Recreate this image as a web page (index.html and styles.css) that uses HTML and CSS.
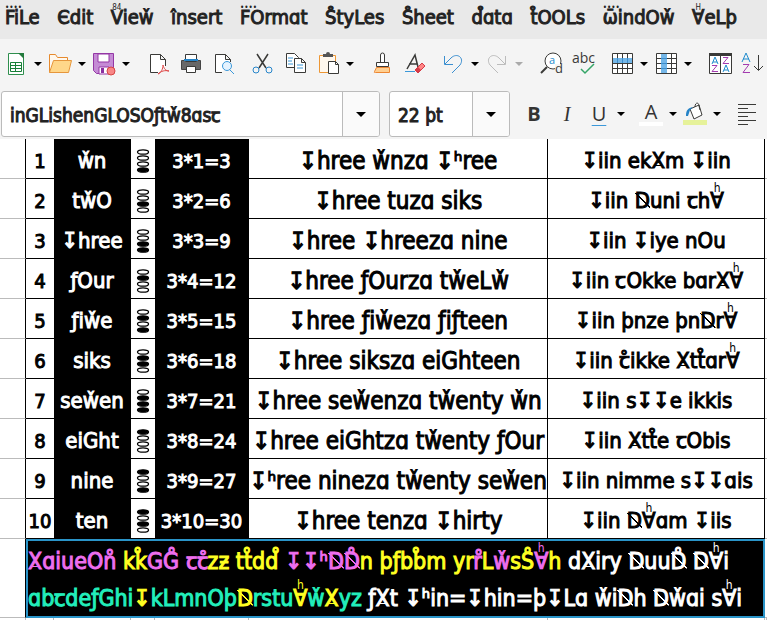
FILE: index.html
```html
<!DOCTYPE html>
<html lang="en">
<head>
<meta charset="utf-8">
<title>Spreadsheet</title>
<link rel="stylesheet" href="styles.css">
</head>
<body>
<nav class="menu">
<a href="#"><span class="marked" data-mark="••••">F</span>iLe</a>
<a href="#">Єdit</a>
<a href="#"><span class="marked" data-mark="84">V</span>iew̌</a>
<a href="#">însert</a>
<a href="#"><span class="marked" data-mark="••••">F</span>Ormɑt</a>
<a href="#">S̊tyLes</a>
<a href="#">S̊heet</a>
<a href="#">d̊ɑtɑ</a>
<a href="#">t̊OOLs</a>
<a href="#"><span class="marked" data-mark="••••">ω̄</span>indOw̌</a>
<a href="#"><span class="marked" data-mark="H">∀</span>eLþ</a>
</nav>
<div class="bars">
<div class="toolbar">
  <div class="group tight">
    <button class="tool" aria-label="New"><svg viewBox="0 0 24 24"><path d="M4.500 1.500h11l4 4v17h-15z" fill="#fff" stroke="#2f8f4e"/><path d="M14 1h6v6z" fill="#227a3c"/><path d="M6.500 10.500h11v9h-11zM6.500 13.500h11M6.500 16.500h11M11.500 10.500v9" fill="none" stroke="#188038"/></svg></button>
    <button class="drop" aria-label="New options"></button>
    <button class="tool" aria-label="Open"><svg viewBox="0 0 24 24"><path d="M1.500 20.500v-18h6l2 3h10v3" fill="#fff8ee" stroke="#e68a2e"/><path d="M1.500 20.500l4-12h18l-3 12z" fill="#ffd78a" stroke="#e6963c"/></svg></button>
    <button class="drop" aria-label="Open options"></button>
    <button class="tool" aria-label="Save"><svg viewBox="0 0 24 24"><path d="M1.500 1.500h20v20h-17l-3-3z" fill="#c58bd5" stroke="#9437a5"/><path d="M6 2h11v8H6zM7 15h10v7H7z" fill="#fff" stroke="#9437a5"/><path d="M9 16h3v5H9z" fill="#8a2fa0"/><circle cx="19" cy="19" r="4" fill="#f88686" stroke="#d64545"/></svg></button>
    <button class="drop" aria-label="Save options"></button>
  </div>
  <div class="group">
    <button class="tool" aria-label="Export as PDF"><svg viewBox="0 0 24 24"><path d="M12 20.500H4.500v-18h10l5 5V14M14.500 2.500v5h5" fill="#fff" stroke="#3a3a38"/><path d="M12 22c3-1 5-5 5-9 1 4 3 6 6 6-4-1-8 0-11 3z" fill="none" stroke="#e04848"/></svg></button>
    <button class="tool" aria-label="Print"><svg viewBox="0 0 24 24"><path d="M2.500 8.500h19v9h-19z" fill="#686868" stroke="#444"/><path d="M6.500 2.500h11v7h-11z" fill="#fff" stroke="#3a3a38"/><path d="M5 7h14v2H5z" fill="#2583c7"/><path d="M7.500 14.500h9v6h-9z" fill="#fff" stroke="#3a3a38"/></svg></button>
    <button class="tool" aria-label="Print preview"><svg viewBox="0 0 24 24"><path d="M10 20.500H3.500v-18h10l5 5V10M13.500 2.500v5h5" fill="#fff" stroke="#3a3a38"/><circle cx="15" cy="14" r="4.500" fill="#e5f3ff" stroke="#3b98d9"/><path d="M18 18l4 4" stroke="#3b98d9"/></svg></button>
  </div>
  <div class="group">
    <button class="tool" aria-label="Cut"><svg viewBox="0 0 24 24" fill="none"><path d="M7 2l9 14M18 2L9 16" stroke="#3a3a38" stroke-width="1.500"/><circle cx="6" cy="18" r="3" stroke="#2685ca"/><circle cx="19" cy="18" r="3" stroke="#2685ca"/></svg></button>
    <button class="tool" aria-label="Copy"><svg viewBox="0 0 24 24"><path d="M3.500 1.500h8l4 4v10h-12z" fill="#fff" stroke="#3a3a38"/><path d="M5 6h5M5 9h4M5 12h5" stroke="#3b98d9"/><path d="M11.500 6.500h7l4 4v10h-11zM18.500 6.500v4h4" fill="#fff" stroke="#3a3a38"/><path d="M14 13h6M14 16h6" stroke="#3b98d9"/></svg></button>
    <div class="group tight">
    <button class="tool" aria-label="Paste"><svg viewBox="0 0 24 24"><path d="M3.500 3.500h16v17h-16z" fill="#fff8ee" stroke="#ed9735"/><path d="M7 2h3a2 2 0 0 1 4 0h3v3H7z" fill="#555"/><path d="M12.500 9.500h7l3 3v9h-10z" fill="#fff" stroke="#3a3a38"/><path d="M19.500 9.500v3h3" fill="none" stroke="#3a3a38"/></svg></button>
    <button class="drop" aria-label="Paste options"></button>
    </div>
  </div>
  <div class="group">
    <button class="tool" aria-label="Clone formatting"><svg viewBox="0 0 24 24"><path d="M10.500 10V3a2 2 0 0 1 4 0v7" fill="#fff" stroke="#3a3a38"/><path d="M6.500 10.500h12v4h-12z" fill="#fff" stroke="#3a3a38"/><path d="M6.500 15.500h13v5h-14q-2 0-1-1z" fill="#ffcf91" stroke="#ed8733"/></svg></button>
    <button class="tool" aria-label="Clear formatting"><svg viewBox="0 0 24 24"><path d="M4 17l8-14 3 12M6 12h8" fill="none" stroke="#3a3a38" stroke-width="1.500"/><path d="M2 19.500h10" stroke="#3b98d9"/><path d="M12 18l7-7 3 3-7 7z" fill="#ff8585" stroke="#d63b47"/><path d="M12 18l3-3 3 3-3 3z" fill="#d63b47"/></svg></button>
  </div>
  <div class="group tight">
    <button class="tool" aria-label="Undo"><svg viewBox="0 0 24 24"><path d="M3.500 4v8.500H12M4 12l6-6c6-6 14 0 9 7l-8 8" fill="none" stroke="#3b8fd0"/></svg></button>
    <button class="drop" aria-label="Undo options"></button>
    <button class="tool" aria-label="Redo" disabled><svg viewBox="0 0 24 24"><path d="M20.500 4v8.500H12M20 12l-6-6C8 0 0 6 5 13l8 8" fill="none" stroke="#bcbcbc"/></svg></button>
    <button class="drop dim" aria-label="Redo options" disabled></button>
  </div>
  <div class="group">
    <button class="tool" aria-label="Find and replace"><svg viewBox="0 0 24 24"><circle cx="14" cy="9" r="8" fill="#fff" stroke="#3a3a38"/><path d="M8 15l-6 6" stroke="#3a3a38" stroke-width="2"/><path d="M16 12h9v11h-9z" fill="#f4f4f4"/><text x="10" y="12" font-size="11" fill="#1e8bcd">a</text><text x="16" y="21" font-size="13" fill="#3a3a38">d</text></svg></button>
    <button class="tool" aria-label="Spelling"><svg viewBox="0 0 24 24"><text x="0" y="11" font-size="14" fill="#3a3a38">abc</text><path d="M9 17l4 4 9-9" fill="none" stroke="#35a567" stroke-width="1.500"/></svg></button>
  </div>
  <div class="group tight">
    <button class="tool" aria-label="Row"><svg viewBox="0 0 24 24"><path d="M2.500 1.500h20v20h-20z" fill="#fff"/><path d="M2.500 1.500h20v20h-20zM2.500 6.500h20M2.500 11.500h20M2.500 16.500h20M7.500 1.500v20M12.500 1.500v20M17.500 1.500v20" fill="none" stroke="#3a3a38"/><path d="M3 6h19v5H3z" fill="#75b7e8"/><path d="M7.500 6v5M12.500 6v5M17.500 6v5" stroke="#3b8fd0"/></svg></button>
    <button class="drop" aria-label="Row options"></button>
    <button class="tool" aria-label="Column"><svg viewBox="0 0 24 24"><path d="M2.500 1.500h20v20h-20z" fill="#fff"/><path d="M2.500 1.500h20v20h-20zM2.500 6.500h20M2.500 11.500h20M2.500 16.500h20M7.500 1.500v20M12.500 1.500v20M17.500 1.500v20" fill="none" stroke="#3a3a38"/><path d="M7 2h6v19H7z" fill="#75b7e8"/><path d="M7 6.500h6M7 11.500h6M7 16.500h6" stroke="#3b8fd0"/></svg></button>
    <button class="drop" aria-label="Column options"></button>
  </div>
  <div class="group">
    <button class="tool" aria-label="Sort"><svg viewBox="0 0 24 24"><path d="M1.500 2.500h22v19h-22zM12.500 3v18" fill="#fff" stroke="#3a3a38"/><path d="M1 1h23v3H1z" fill="#3a3a38"/><path d="M4 12l3-7 3 7M5 10h4M15 20l3-7 3 7M16 18h4" fill="none" stroke="#1e8bcd"/><path d="M4 13.500h5l-5 6h6M15 5.500h5l-5 6h6" fill="none" stroke="#a33cb0"/></svg></button>
    <button class="tool" aria-label="Sort ascending"><svg viewBox="0 0 24 24"><path d="M1 10l4-9 4 9M2 7h6" fill="none" stroke="#1e8bcd"/><path d="M2 12.500h6l-6 8h7" fill="none" stroke="#a33cb0"/><path d="M17.500 3v15M13 14l4.500 4.500L22 14" fill="none" stroke="#3a3a38"/></svg></button>
  </div>
</div>
<div class="format">
  <div class="combo name"><input type="text" aria-label="Font name" value="inGLishenGLOSOƒtw̌8ɑsꞇ"><button aria-label="Font list"></button></div>
  <div class="combo size"><input type="text" aria-label="Font size" value="22 þt"><button aria-label="Size list"></button></div>
  <div class="styles">
    <div class="group"><button class="tool letter bold">B</button><button class="tool letter italic">I</button></div>
    <div class="group tight"><button class="tool letter under">U</button><button class="drop" aria-label="Underline options"></button></div>
  </div>
  <div class="group tight">
    <button class="tool letter color">A</button><button class="drop" aria-label="Font color options"></button>
    <button class="tool" aria-label="Background color"><svg viewBox="0 0 24 24"><path d="M0 18h24v5H0z" fill="#e6f29a"/><path d="M7 7l9-4 3 10-8 4zM12 5c0-5 4-5 4-1l1 4" fill="#fff" stroke="#3a3a38"/><path d="M3 14c0-6 2-8 7-9L7 8l-2 6z" fill="#2583c7"/></svg></button><button class="drop" aria-label="Background color options"></button>
  </div>
  <button class="tool" aria-label="Align left"><svg viewBox="0 0 24 24"><path d="M3 2.500h18M3 6.500h10M3 10.500h18M3 14.500h10M3 18.500h18M3 22.500h10" stroke="#3a3a38"/></svg></button>
</div>
</div>
<table class="sheet">
<colgroup><col class="c-edge"><col class="c-num"><col class="c-word"><col class="c-dots"><col class="c-sum"><col class="c-phrase"><col><col class="c-end"></colgroup>
<tbody id="rows"></tbody>
</table>
<script src="script.js"></script>
</body>
</html>
```
FILE: styles.css
```css
* { box-sizing: border-box; }

body {
  margin: 0;
  background: #fff;
  color: #000;
  font-family: "DejaVu Sans Condensed", "DejaVu Sans", sans-serif;
  overflow-x: hidden;
}

button, input { font: inherit; color: inherit; }

.menu {
  display: flex;
  justify-content: space-between;
  height: 39px;
  padding: 2px 30px 0 5px;
  background: #e9e9e9;
  font-size: 20px;
  line-height: 30px;
  -webkit-text-stroke: 1px;
}
.menu a { color: #222; text-decoration: none; white-space: nowrap; }

.bars { background: #f4f4f4; height: 100px; overflow: hidden; }

.toolbar {
  display: flex;
  gap: 14px;
  height: 50px;
  padding: 0 4px;
  align-items: center;
}
.group { display: flex; gap: 9px; align-items: center; }
.group.tight { gap: 4px; }

.tool, .drop, .combo button {
  flex: none;
  border: 0;
  padding: 0;
  background: none;
}
.tool { width: 24px; height: 24px; }
.tool svg { display: block; width: 24px; height: 24px; overflow: visible; font-family: "Open Sans", sans-serif; }
.drop { width: 12px; height: 24px; display: flex; align-items: center; justify-content: center; }
.drop::before, .combo button::before {
  content: "";
  border: 4px solid transparent;
  border-top-color: #000;
  border-bottom: 0;
}
.drop.dim::before { border-top-color: #aaa; }

.format {
  display: flex;
  gap: 12px;
  height: 48px;
  padding: 2px 8px 0 1px;
  align-items: center;
}
.combo {
  display: flex;
  height: 46px;
  border: 1px solid #bbb;
  border-radius: 3px;
  background: #fff;
  overflow: hidden;
}
.combo.name { flex: 1; margin-right: -3px; }
.combo.size { width: 121px; }
.combo input {
  flex: 1;
  min-width: 0;
  border: 0;
  padding: 2px 8px 0;
  background: none;
  color: #222;
  font-size: 19px;
  outline: 0;
  -webkit-text-stroke: 1px;
}
.combo button {
  display: flex;
  width: 37px;
  align-items: center;
  justify-content: center;
  border-left: 1px solid #bbb;
  background: #fafafa;
}
.combo button::before { border-width: 5px 5px 0; }

.styles { display: flex; gap: 8px; }
.letter { font: 20px/24px "Open Sans", sans-serif; color: #333; }
.bold { font-weight: 700; }
.italic { font-family: "Liberation Serif", serif; font-style: italic; }
.under { text-decoration: underline #3b98d9 1px; text-underline-offset: 4px; }
.color { border-bottom: 4px solid #fff; line-height: 18px; }

.sheet {
  width: 100%;
  table-layout: fixed;
  border-collapse: separate;
  border-spacing: 0;
  font-size: 22px;
  -webkit-text-stroke: 1px;
}
.c-edge { width: 26px; }
.c-num { width: 28px; }
.c-word { width: 77px; }
.c-dots { width: 24px; }
.c-sum { width: 94px; }
.c-phrase { width: 39%; }
.c-end { width: 2px; }

.sheet td {
  height: 40px;
  padding: 5px 0 0;
  border-right: 1px solid #000;
  border-bottom: 1px solid #000;
  text-align: center;
  white-space: nowrap;
  line-height: 30px;
}
.sheet .edge { border-bottom-color: #bbb; }
.sheet .end { border-right: 0; border-bottom-color: #bbb; }
.sheet .ink { background: #000; color: #fff; }
.sheet .num, .sheet .dots { border-right: 0; }
.sheet .num, .sheet .sum { font-size: 20px; }
.sheet .phrase { font-size: 24px; }
.dots svg { display: block; width: 14px; height: 24px; margin: 0 auto; }

.sheet .picked {
  height: 79px;
  padding: 1px 0 0;
  border: 2px solid #2a94c8;
  background: #000;
  text-align: left;
  font-size: 23px;
}
.picked div { height: 37px; line-height: 38px; }
.sheet .tail td { height: 4px; padding: 0; border-bottom: 0; border-color: #bbb; }

.pink { color: #ee6eee; }
.lemon { color: #ffff22; }
.aqua { color: #22eebb; }
.white { color: #fff; }

.marked { position: relative; }
.marked::before {
  content: attr(data-mark);
  position: absolute;
  left: 0;
  right: 0;
  top: -6px;
  font-size: 12px;
  line-height: 12px;
  text-align: center;
  -webkit-text-stroke: 0;
}
.menu .marked::before { font-size: 8px; top: -3px; }
.slashed {
  background: linear-gradient(to top right, transparent 48%, currentColor 48%, currentColor 54%, transparent 54%) center / 100% 60% no-repeat;
}
.barred {
  background: linear-gradient(currentColor, currentColor) center 72% / 60% 1px no-repeat;
}
```
FILE: script.js
```js
const rows = [
  ["w̌n", "3", "↧hree w̌nzɑ ↧ʰree", "↧iin ekXm ↧iin"],
  ["tw̌O", "6", "↧hree tuzɑ siks", "↧iin Duni ꞇh∀"],
  ["↧hree", "9", "↧hree ↧hreezɑ nine", "↧iin ↧iye nOu"],
  ["ƒOur", "12", "↧hree ƒOurzɑ tw̌eLw̌", "↧iin ꞇOkke bɑrX∀"],
  ["ƒiw̌e", "15", "↧hree ƒiw̌ezɑ ƒiƒteen", "↧iin þnze þnDr∀"],
  ["siks", "18", "↧hree sikszɑ eiGhteen", "↧iin ꞇ̊ikke Xtt̊ɑr∀"],
  ["sew̌en", "21", "↧hree sew̌enzɑ tw̌enty w̌n", "↧iin s↧↧e ikkis"],
  ["eiGht", "24", "↧hree eiGhtzɑ tw̌enty ƒOur", "↧iin Xtt̊e ꞇObis"],
  ["nine", "27", "↧ʰree ninezɑ tw̌enty sew̌en", "↧iin nimme s↧↧ɑis"],
  ["ten", "30", "↧hree tenzɑ ↧hirty", "↧iin D∀ɑm ↧iis"],
];

const lines = [
  [["pink", "XɑiueOn̊ "], ["lemon", "kk̊"], ["pink", "GG̊ ꞇꞇ̊"], ["lemon", "zƶ tt̊dd̊ "], ["pink", "↧↧ʰDD̊"],
   ["lemon", "n þƒbb̊m yr"], ["pink", "r̊"], ["lemon", "L"], ["pink", "w̌"], ["lemon", "sS̊"], ["pink", "∀"],
   ["lemon", "h "], ["white", "dXiry DuuD̊ D∀i"]],
  [["aqua", "ɑbꞇdeƒGhi"], ["lemon", "↧"], ["aqua", "kLmnOþ"], ["lemon", "D"], ["aqua", "rstu"], ["lemon", "∀"],
   ["aqua", "w̌"], ["lemon", "X"], ["aqua", "yz "], ["white", "ƒXt ↧ʰin=↧hin=þ↧Lɑ w̌iDh Dw̌ɑi s∀i"]],
];

// Letters that carry an extra stroke or a small letter on top.
const letters = text => text
  .replace(/∀/g, '<span class="marked" data-mark="h">∀</span>')
  .replace(/D̊?/g, '<span class="slashed">$&</span>')
  .replace(/X/g, '<span class="barred">X</span>');

// Four ovals show the row number in binary, highest bit on top.
const ovals = n => '<svg viewBox="0 0 14 24">' + [8, 4, 2, 1].map((bit, i) =>
  `<ellipse cx="7" cy="${3 + i * 6}" rx="5.500" ry="2.200" stroke="#000" stroke-width="1.300" fill="${n & bit ? "#000" : "#fff"}"/>`
).join("") + "</svg>";

document.getElementById("rows").innerHTML = rows.map(([word, product, phrase, answer], i) => `
  <tr><td class="edge"></td><td class="num">${i + 1}</td><td class="ink">${letters(word)}</td>
  <td class="dots">${ovals(i + 1)}</td><td class="ink sum">3*${i + 1}=${product}</td>
  <td class="phrase">${letters(phrase)}</td><td>${letters(answer)}</td><td class="end"></td></tr>`).join("") +
  `<tr><td class="edge"></td><td class="picked" colspan="6">` +
  lines.map(line => "<div>" + line.map(([tone, text]) => `<span class="${tone}">${letters(text)}</span>`).join("") + "</div>").join("") +
  `</td><td class="end"></td></tr><tr class="tail">${"<td></td>".repeat(8)}</tr>`;
```
